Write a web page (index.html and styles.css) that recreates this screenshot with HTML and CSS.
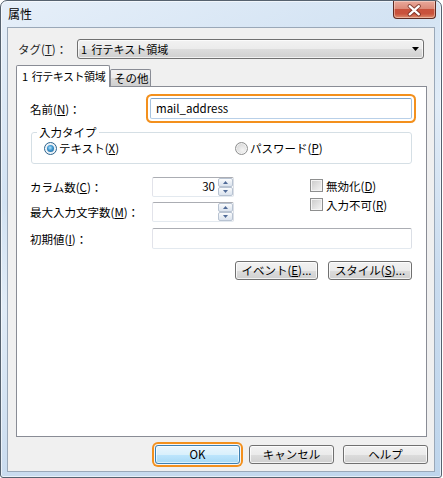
FILE: index.html
```html
<!DOCTYPE html>
<html lang="ja">
<head>
<meta charset="utf-8">
<title>属性</title>
<link rel="stylesheet" href="styles.css">
</head>
<body>
<div class="window">
  <div class="titlebar">
    <span class="title">属性</span>
    <div class="close">
      <svg width="43" height="18" viewBox="0 0 43 18">
        <path d="M17 5 L26.5 13.5 M26.5 5 L17 13.5" stroke="#6b2a20" stroke-width="4.2" stroke-linecap="round" fill="none" opacity="0.75"/>
        <path d="M17 5 L26.5 13.5 M26.5 5 L17 13.5" stroke="#ffffff" stroke-width="2.2" stroke-linecap="round" fill="none"/>
      </svg>
    </div>
  </div>
  <div class="client">
    <div class="tag-row">
      <span class="tag-label">タグ(<u>T</u>)：</span>
      <div class="combo">
        <span class="combo-text">1 行テキスト領域</span>
        <svg class="combo-arrow" width="7" height="4" viewBox="0 0 7 4"><path d="M0 0 H7 L3.5 4 Z" fill="#000"/></svg>
      </div>
    </div>
    <div class="tabs">
      <div class="tab active">1 行テキスト領域</div>
      <div class="tab">その他</div>
    </div>
    <div class="panel">
      <div class="name-row">
        <span class="label name-label">名前(<u>N</u>)：</span>
        <div class="edit name-edit">mail_address</div>
      </div>
      <fieldset class="group">
        <legend>入力タイプ</legend>
        <div class="radios">
          <div class="radio-item first"><span class="radio checked"><span class="dot"></span></span><span class="opt-text">テキスト(<u>X</u>)</span></div>
          <div class="radio-item"><span class="radio"></span><span class="opt-text">パスワード(<u>P</u>)</span></div>
        </div>
      </fieldset>
      <div class="num-section">
        <div class="num-rows">
          <div class="num-row">
            <span class="label num-label">カラム数(<u>C</u>)：</span>
            <div class="spin">
              <span class="spin-value">30</span>
              <span class="spin-btns">
                <span class="spin-btn"><svg width="5" height="3" viewBox="0 0 5 3"><path d="M0 3 L2.5 0 L5 3 Z" fill="#4f6a97"/></svg></span>
                <span class="spin-btn"><svg width="5" height="3" viewBox="0 0 5 3"><path d="M0 0 H5 L2.5 3 Z" fill="#4f6a97"/></svg></span>
              </span>
            </div>
          </div>
          <div class="num-row">
            <span class="label num-label">最大入力文字数(<u>M</u>)：</span>
            <div class="spin">
              <span class="spin-value"></span>
              <span class="spin-btns">
                <span class="spin-btn"><svg width="5" height="3" viewBox="0 0 5 3"><path d="M0 3 L2.5 0 L5 3 Z" fill="#4f6a97"/></svg></span>
                <span class="spin-btn"><svg width="5" height="3" viewBox="0 0 5 3"><path d="M0 0 H5 L2.5 3 Z" fill="#4f6a97"/></svg></span>
              </span>
            </div>
          </div>
        </div>
        <div class="checks">
          <div class="check-item"><span class="check"></span><span class="opt-text">無効化(<u>D</u>)</span></div>
          <div class="check-item"><span class="check"></span><span class="opt-text">入力不可(<u>R</u>)</span></div>
        </div>
      </div>
      <div class="init-row">
        <span class="label num-label">初期値(<u>I</u>)：</span>
        <div class="edit init-edit"></div>
      </div>
      <div class="panel-buttons">
        <div class="btn event-btn"><span>イベント(<u>E</u>)...</span></div>
        <div class="btn style-btn"><span>スタイル(<u>S</u>)...</span></div>
      </div>
    </div>
    <div class="dialog-buttons">
      <div class="btn dlg default">OK</div>
      <div class="btn dlg">キャンセル</div>
      <div class="btn dlg">ヘルプ</div>
    </div>
  </div>
</div>
</body>
</html>
```

FILE: styles.css
```css
* { box-sizing: border-box; }
html, body { margin: 0; padding: 0; background: #ffffff; }
body {
  font-family: "Noto Sans CJK JP", "Noto Sans", sans-serif;
  font-size: 11.5px;
  color: #000;
}
u { text-decoration: underline; text-underline-offset: 1px; }

.window {
  width: 442px;
  height: 478px;
  border: 1px solid #56626f;
  border-radius: 7px 7px 3px 3px;
  background: linear-gradient(155deg, #e6eff9 0%, #d3e3f3 30%, #e1ecf7 45%, #cadcef 70%, #bed5ec 100%);
  box-shadow: inset 0 0 0 1px rgba(255,255,255,0.6);
  display: flex;
  flex-direction: column;
  overflow: hidden;
}

.titlebar {
  height: 26px;
  flex: none;
  display: flex;
  justify-content: space-between;
  align-items: flex-start;
  padding-left: 7px;
}
.title {
  font-size: 12px;
  line-height: 16px;
  padding-top: 5px;
  color: #000;
}
.close {
  width: 43px;
  height: 18px;
  margin-right: 5px;
  border: 1px solid #5e2a22;
  border-top: none;
  border-radius: 0 0 4px 4px;
  background: linear-gradient(#e9a99b 0%, #dc8a79 45%, #c8513c 50%, #c9523c 75%, #dd8d6e 100%);
  box-shadow: inset 0 0 0 1px rgba(255,235,225,0.45);
  display: flex;
  overflow: hidden;
}
.close svg { margin-left: -1px; }

.client {
  flex: 1;
  margin: 0 6px 5px 6px;
  border: 1px solid #9aa8b8;
  background: #f0f0f0;
  padding: 11px 6px 7px 8px;
  display: flex;
  flex-direction: column;
}

.tag-row {
  height: 20px;
  display: flex;
  align-items: center;
  flex: none;
}
.tag-label {
  width: 59px;
  margin-left: 2px;
  color: #222;
}
.combo {
  flex: 1;
  height: 20px;
  margin-right: 4px;
  border: 1px solid #707070;
  border-radius: 3px;
  background: linear-gradient(#f2f2f2 0%, #ebebeb 50%, #dddddd 50%, #cfcfcf 100%);
  box-shadow: inset 0 0 0 1px rgba(255,255,255,0.7);
  display: flex;
  align-items: center;
  justify-content: space-between;
  padding: 0 4px 0 3px;
}
.combo-text { font-size: 11px; word-spacing: 2px; }
.combo-arrow { flex: none; }

.tabs {
  margin-top: 6px;
  height: 21px;
  flex: none;
  display: flex;
  align-items: flex-end;
}
.tab {
  border: 1px solid #898c95;
  border-bottom: none;
  border-radius: 2px 2px 0 0;
  line-height: 15px;
  white-space: nowrap;
  overflow: hidden;
}
.tab.active {
  width: 94px;
  height: 22px;
  margin-bottom: -1px;
  background: #ffffff;
  padding: 3px 0 0 5px;
  font-size: 11px;
  letter-spacing: -0.45px;
  word-spacing: 2px;
  position: relative;
  z-index: 1;
}
.tab:not(.active) {
  width: 41px;
  height: 17px;
  background: linear-gradient(#f2f2f2 0%, #ebebeb 50%, #dddddd 50%, #cfcfcf 100%);
  padding: 1px 0 0 3px;
}

.panel {
  height: 351px;
  flex: none;
  margin-right: 1px;
  border: 1px solid #898c95;
  background: #ffffff;
  padding: 11px 14px 0 13px;
}

.label { flex: none; white-space: nowrap; }
.name-row {
  display: flex;
  align-items: center;
}
.name-label { width: 120px; }
.edit {
  border: 1px solid;
  border-color: #abadb3 #dbdfe6 #e3e9ef #e2e3ea;
  background: #fff;
  border-radius: 2px;
}
.name-edit {
  width: 262px;
  height: 21px;
  line-height: 18px;
  padding-left: 5px;
  border-color: #7ea4cc #a6c3e0 #b9d0e8 #a6c3e0;
  box-shadow: 0 0 0 2px #ffffff, 0 0 0 4px #f3901d;
  border-radius: 2px;
}

.group {
  margin: 6px 0 0 1px;
  padding: 0 0 8px 12px;
  border: 1px solid #d5dfe5;
  border-radius: 3px;
  min-width: 0;
}
.group legend {
  padding: 0 2px;
  margin-left: -7px;
  line-height: 14px;
}
.radios {
  display: flex;
  align-items: center;
  height: 13px;
  margin-top: 3px;
}
.radio-item {
  display: flex;
  align-items: center;
  gap: 2px;
  line-height: 13px;
}
.opt-text { white-space: nowrap; }
.radio-item.first { width: 191px; }
.radio {
  width: 13px;
  height: 13px;
  border-radius: 50%;
  border: 1px solid #8e8f8f;
  background: radial-gradient(circle at 60% 65%, #f4f4f4 0%, #d6d6d6 80%);
  box-shadow: inset 0 0 0 1px rgba(255,255,255,0.6);
  display: grid;
  place-items: center;
  flex: none;
}
.radio.checked { border-color: #2c628b; background: radial-gradient(circle, #f4f8fc 0%, #dbe6f0 90%); }
.dot {
  width: 7px;
  height: 7px;
  border-radius: 50%;
  background: radial-gradient(circle at 45% 40%, #b6e3fc 0%, #3d96cf 45%, #155a8f 100%);
}

.num-section {
  margin-top: 13px;
  display: flex;
  align-items: flex-start;
}
.num-rows {
  width: 204px;
  display: flex;
  flex-direction: column;
  gap: 5px;
}
.num-row {
  display: flex;
  align-items: center;
  height: 20px;
}
.num-label { width: 122px; }
.spin {
  width: 82px;
  height: 20px;
  border: 1px solid;
  border-color: #abadb3 #dbdfe6 #e3e9ef #e2e3ea;
  border-radius: 2px;
  background: #fff;
  display: flex;
}
.spin-value {
  flex: 1;
  text-align: right;
  padding-right: 3px;
  line-height: 17px;
}
.spin-btns {
  width: 15px;
  display: flex;
  flex-direction: column;
}
.spin-btn {
  flex: 1;
  border: 1px solid #b8c3d2;
  border-radius: 2px;
  background: linear-gradient(#fbfcfd 0%, #e9eef4 50%, #dbe3ee 100%);
  display: grid;
  place-items: center;
}
.spin-btn svg { display: block; }

.checks {
  margin-left: 76px;
  margin-top: -1px;
  display: flex;
  flex-direction: column;
}
.check-item {
  height: 19px;
  display: flex;
  align-items: center;
  gap: 3px;
}
.check {
  width: 13px;
  height: 13px;
  flex: none;
  border: 1px solid #8e8f8f;
  background: linear-gradient(135deg, #c9c9c9 0%, #e2e2e2 55%, #f5f5f5 100%);
  box-shadow: inset 0 0 0 1px #f4f4f4;
}

.init-row {
  margin-top: 6px;
  display: flex;
  align-items: center;
}
.init-edit {
  width: 260px;
  height: 21px;
}

.panel-buttons {
  margin-top: 12px;
  display: flex;
  justify-content: flex-end;
  gap: 10px;
}
.btn {
  height: 19px;
  border: 1px solid #707070;
  border-radius: 3px;
  background: linear-gradient(#f2f2f2 0%, #ebebeb 50%, #dddddd 50%, #cfcfcf 100%);
  box-shadow: inset 0 0 0 1px rgba(255,255,255,0.75);
  display: flex;
  align-items: center;
  justify-content: center;
  line-height: 15px;
  white-space: nowrap;
}
.event-btn { width: 83px; }
.style-btn { width: 84px; }

.dialog-buttons {
  margin-top: 8px;
  flex: none;
  display: flex;
  justify-content: flex-end;
  gap: 9px;
}
.dlg { width: 85px; }
.dlg.default {
  border-color: #3c7fb1;
  background: linear-gradient(#eaf6fd 0%, #d9f0fc 50%, #bee6fd 50%, #a7d9f5 100%);
  box-shadow: inset 0 0 0 1px rgba(255,255,255,0.6), 0 0 0 1px #f5f5f5, 0 0 0 3px #f3901d;
}
```
